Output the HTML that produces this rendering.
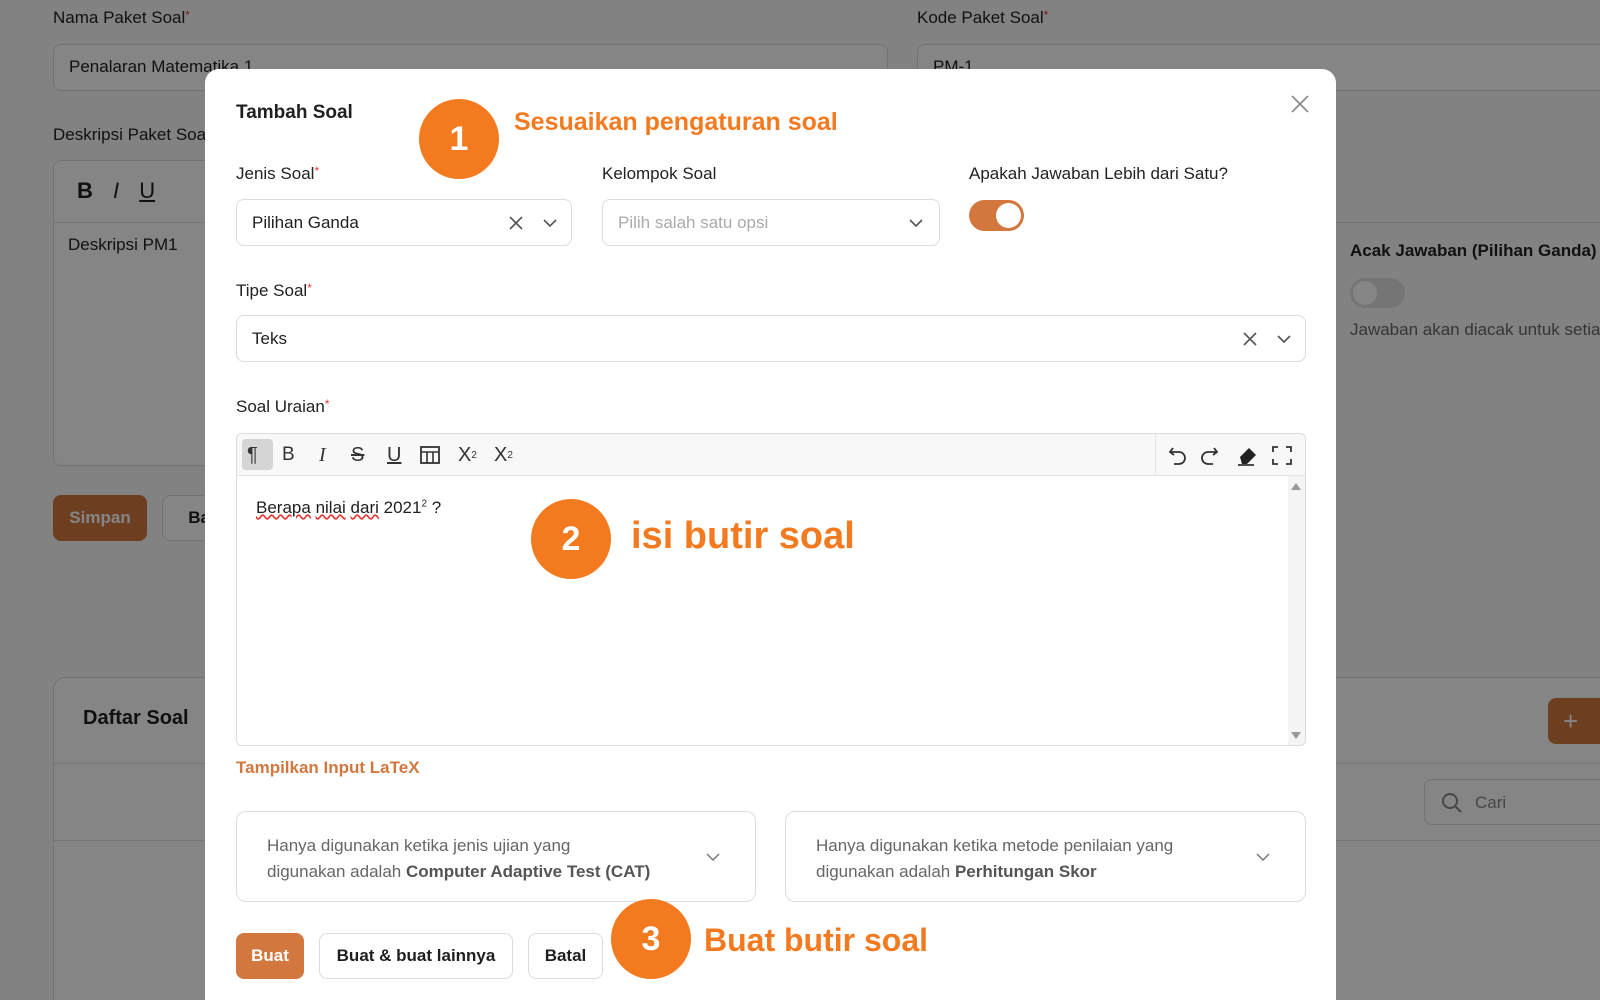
<!DOCTYPE html>
<html><head><meta charset="utf-8"><style>
*{box-sizing:border-box;margin:0;padding:0}
html,body{width:1600px;height:1000px;overflow:hidden}
body{background:#fafafa;font-family:"Liberation Sans",sans-serif;color:#1f1f1f;position:relative}
.a{position:absolute}
.lbl{font-size:17px;color:#222}
.req{color:#e53935;font-size:12px;vertical-align:top}
.inp{border:1px solid #dcdcdc;border-radius:8px;background:#fff}
.ov{position:absolute;left:0;top:0;width:1600px;height:1000px;background:rgba(0,0,0,0.48)}
.circ{position:absolute;width:80px;height:80px;border-radius:50%;background:#f47a20;color:#fff;font-weight:bold;font-size:34px;display:flex;align-items:center;justify-content:center}
.ann{position:absolute;color:#f47a20;font-weight:bold;white-space:nowrap}
.btn{position:absolute;height:46px;border:1px solid #dcdcdc;border-radius:8px;background:#fff;font-size:17px;font-weight:bold;display:flex;align-items:center;justify-content:center}
.tb{position:absolute;top:0;height:42px;display:flex;align-items:center;font-size:20px;color:#333}
</style></head><body>
<div class="a lbl" style="left:53px;top:8px">Nama Paket Soal<span class="req">*</span></div>
<div class="a inp" style="left:53px;top:44px;width:835px;height:47px;padding:12px 15px;font-size:17px">Penalaran Matematika 1</div>
<div class="a lbl" style="left:917px;top:8px">Kode Paket Soal<span class="req">*</span></div>
<div class="a inp" style="left:917px;top:44px;width:700px;height:47px;padding:12px 15px;font-size:17px">PM-1</div>
<div class="a lbl" style="left:53px;top:125px">Deskripsi Paket Soal</div>
<div class="a inp" style="left:53px;top:160px;width:1600px;height:306px"></div>
<div class="a" style="left:53px;top:222px;width:1600px;border-top:1px solid #e0e0e0"></div>
<div class="a" style="left:77px;top:178px;font-size:22px;font-weight:bold">B <i style="margin-left:14px;font-weight:normal">I</i> <u style="margin-left:14px;font-weight:normal">U</u></div>
<div class="a" style="left:68px;top:235px;font-size:17px">Deskripsi PM1</div>
<div class="a" style="left:1336px;top:160px;width:300px;height:306px;background:#fafafa"></div>
<div class="a" style="left:1336px;top:222px;width:300px;border-top:1px solid #e0e0e0"></div>
<div class="a lbl" style="left:1350px;top:241px;font-weight:bold;white-space:nowrap">Acak Jawaban (Pilihan Ganda)</div>
<div class="a" style="left:1350px;top:278px;width:55px;height:30px;border-radius:15px;background:#e0e0e0"><div style="position:absolute;left:3px;top:3px;width:24px;height:24px;border-radius:50%;background:#fff"></div></div>
<div class="a" style="left:1350px;top:320px;font-size:17px;color:#666;white-space:nowrap">Jawaban akan diacak untuk setiap</div>
<div class="btn" style="left:53px;top:495px;width:94px;background:#d2783f;border-color:#d2783f;color:#fff">Simpan</div>
<div class="btn" style="left:162px;top:495px;width:94px">Batal</div>
<div class="a inp" style="left:53px;top:677px;width:1600px;height:340px;border-radius:12px"></div>
<div class="a" style="left:83px;top:707px;font-size:20px;font-weight:bold">Daftar Soal</div>
<div class="a" style="left:53px;top:763px;width:1600px;border-top:1px solid #e0e0e0"></div>
<div class="a" style="left:53px;top:840px;width:1600px;border-top:1px solid #e0e0e0"></div>
<div class="btn" style="left:1548px;top:698px;width:100px;background:#d2783f;border-color:#d2783f;color:#fff;justify-content:flex-start;padding-left:14px;font-size:26px;font-weight:normal">+</div>
<div class="a inp" style="left:1424px;top:779px;width:200px;height:46px;padding:13px 50px;font-size:17px;color:#888">Cari</div>
<svg class="a" style="left:1440px;top:791px" width="24" height="24" viewBox="0 0 24 24"><circle cx="10" cy="10" r="7" fill="none" stroke="#888" stroke-width="2"/><path d="M15 15L21 21" stroke="#888" stroke-width="2"/></svg>
<div class="ov"></div>

<div class="a" style="left:205px;top:69px;width:1131px;height:960px;background:#fff;border-radius:14px"></div>
<div class="a" style="left:236px;top:102px;font-size:19px;font-weight:bold">Tambah Soal</div>
<svg class="a" style="left:1290px;top:94px" width="20" height="20" viewBox="0 0 20 20"><path d="M2 2L18 18M18 2L2 18" stroke="#888" stroke-width="1.6"/></svg>

<div class="a lbl" style="left:236px;top:164px">Jenis Soal<span class="req">*</span></div>
<div class="a lbl" style="left:602px;top:164px">Kelompok Soal</div>
<div class="a lbl" style="left:969px;top:164px">Apakah Jawaban Lebih dari Satu?</div>
<div class="a inp" style="left:236px;top:199px;width:336px;height:47px;padding:13px 15px;font-size:17px">Pilihan Ganda</div>
<svg class="a" style="left:508px;top:215px" width="60" height="16" viewBox="0 0 60 16"><path d="M2 2L14 14M14 2L2 14" stroke="#555" stroke-width="1.6"/><path d="M36 5L42 11L48 5" stroke="#555" stroke-width="1.6" fill="none"/></svg>
<div class="a inp" style="left:602px;top:199px;width:338px;height:47px;padding:13px 15px;font-size:17px;color:#aaa">Pilih salah satu opsi</div>
<svg class="a" style="left:906px;top:215px" width="20" height="16" viewBox="0 0 20 16"><path d="M4 5L10 11L16 5" stroke="#555" stroke-width="1.6" fill="none"/></svg>
<div class="a" style="left:969px;top:200px;width:55px;height:31px;border-radius:16px;background:#d2783f"><div style="position:absolute;right:3px;top:3px;width:25px;height:25px;border-radius:50%;background:#fff"></div></div>

<div class="a lbl" style="left:236px;top:281px">Tipe Soal<span class="req">*</span></div>
<div class="a inp" style="left:236px;top:315px;width:1070px;height:47px;padding:13px 15px;font-size:17px">Teks</div>
<svg class="a" style="left:1242px;top:331px" width="60" height="16" viewBox="0 0 60 16"><path d="M2 2L14 14M14 2L2 14" stroke="#555" stroke-width="1.6"/><path d="M36 5L42 11L48 5" stroke="#555" stroke-width="1.6" fill="none"/></svg>

<div class="a lbl" style="left:236px;top:397px">Soal Uraian<span class="req">*</span></div>
<div class="a" style="left:236px;top:433px;width:1070px;height:313px;border:1px solid #dcdcdc;border-radius:6px;overflow:hidden">
 <div style="position:absolute;left:0;top:0;right:0;height:42px;background:#f8f8f8;border-bottom:1px solid #e5e5e5"></div>
 <div style="position:absolute;left:5px;top:5px;width:31px;height:31px;background:#d5d5d5;border-radius:4px"></div>
 <div class="tb" style="left:10px">¶</div>
 <div class="tb" style="left:45px;font-size:19px">B</div>
 <div class="tb" style="left:82px;font-style:italic;font-family:'Liberation Serif',serif">I</div>
 <div class="tb" style="left:114px;text-decoration:line-through">S</div>
 <div class="tb" style="left:150px;text-decoration:underline">U</div>
 <svg style="position:absolute;left:182px;top:11px" width="22" height="20" viewBox="0 0 22 20"><rect x="2" y="2" width="18" height="16" fill="none" stroke="#333" stroke-width="1.8"/><path d="M2 7H20M8 7V18M14 7V18" stroke="#333" stroke-width="1.6"/></svg>
 <div class="tb" style="left:221px">X<sup style="font-size:10px">2</sup></div>
 <div class="tb" style="left:257px">X<sub style="font-size:10px">2</sub></div>
 <div style="position:absolute;left:918px;top:0;height:42px;border-left:1px solid #e5e5e5"></div>
 <svg style="position:absolute;left:930px;top:10px" width="130" height="24" viewBox="0 0 130 24"><path d="M6 4L3 8L7 11M3 8H12A6 6 0 0 1 12 20H7" stroke="#333" stroke-width="1.8" fill="none"/><path d="M47 4L50 8L46 11M50 8H41A6 6 0 0 0 41 20H46" stroke="#333" stroke-width="1.8" fill="none"/><path d="M73 13L82 4L89 11L80 20H75Z" fill="#222"/><path d="M71 21H87" stroke="#333" stroke-width="1.8"/><path d="M106 8V3H111M119 3H124V8M124 15V20H119M111 20H106V15" stroke="#333" stroke-width="1.8" fill="none"/></svg>
 <div style="position:absolute;right:0;top:42px;width:17px;bottom:0;background:#f4f4f4"></div>
 <svg style="position:absolute;right:4px;top:48px" width="10" height="8"><path d="M0 8L5 1L10 8Z" fill="#999"/></svg>
 <svg style="position:absolute;right:4px;bottom:5px" width="10" height="8"><path d="M0 0L5 7L10 0Z" fill="#999"/></svg>
 <div style="position:absolute;left:19px;top:64px;font-size:17px"><span style="text-decoration:underline wavy #e53935">Berapa</span> <span style="text-decoration:underline wavy #e53935">nilai</span> <span style="text-decoration:underline wavy #e53935">dari</span> 2021<sup style="font-size:10px">2</sup> ?</div>
</div>
<div class="a" style="left:236px;top:758px;font-size:17px;font-weight:bold;color:#d2783f">Tampilkan Input LaTeX</div>

<div class="a inp" style="left:236px;top:811px;width:520px;height:91px;border-radius:10px;padding:21px 30px;font-size:17px;color:#666;line-height:26px">Hanya digunakan ketika jenis ujian yang<br>digunakan adalah <b style="color:#555">Computer Adaptive Test (CAT)</b></div>
<svg class="a" style="left:703px;top:850px" width="20" height="14"><path d="M4 4L10 10L16 4" stroke="#777" stroke-width="1.5" fill="none"/></svg>
<div class="a inp" style="left:785px;top:811px;width:521px;height:91px;border-radius:10px;padding:21px 30px;font-size:17px;color:#666;line-height:26px">Hanya digunakan ketika metode penilaian yang<br>digunakan adalah <b style="color:#555">Perhitungan Skor</b></div>
<svg class="a" style="left:1253px;top:850px" width="20" height="14"><path d="M4 4L10 10L16 4" stroke="#777" stroke-width="1.5" fill="none"/></svg>

<div class="btn" style="left:236px;top:933px;width:68px;background:#d2783f;border-color:#d2783f;color:#fff">Buat</div>
<div class="btn" style="left:319px;top:933px;width:194px">Buat &amp; buat lainnya</div>
<div class="btn" style="left:528px;top:933px;width:75px">Batal</div>

<div class="circ" style="left:419px;top:99px">1</div>
<div class="ann" style="left:514px;top:108px;font-size:25px">Sesuaikan pengaturan soal</div>
<div class="circ" style="left:531px;top:499px">2</div>
<div class="ann" style="left:631px;top:515px;font-size:38px">isi butir soal</div>
<div class="circ" style="left:611px;top:899px">3</div>
<div class="ann" style="left:704px;top:922px;font-size:32px">Buat butir soal</div>
</body></html>
